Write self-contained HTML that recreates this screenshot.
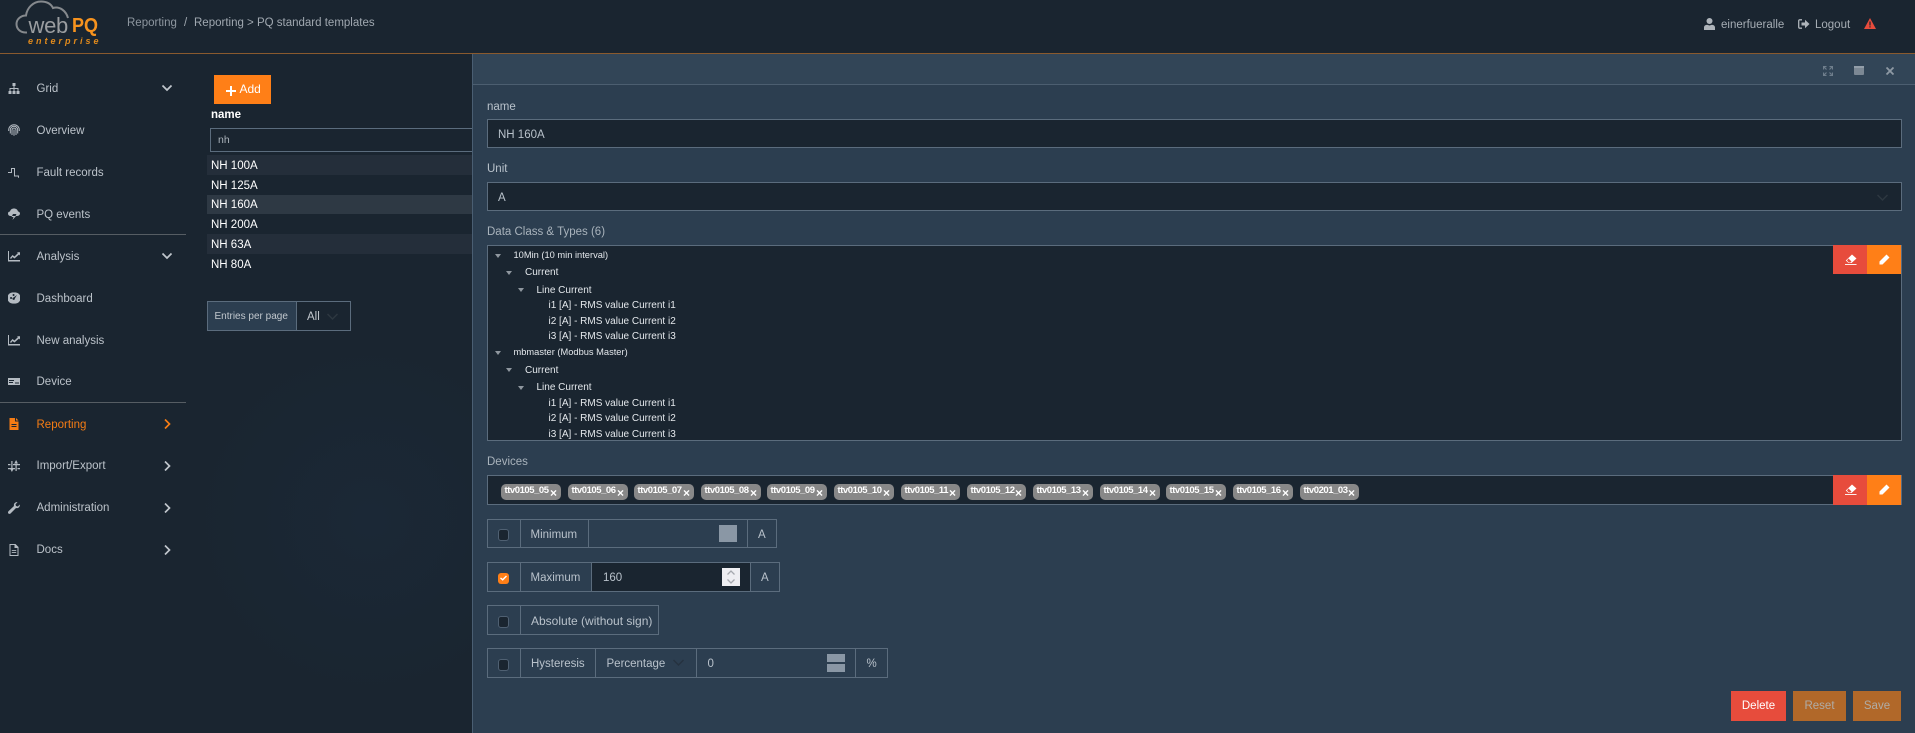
<!DOCTYPE html>
<html lang="en"><head><meta charset="utf-8"><title>webPQ</title>
<style>
*{box-sizing:border-box}
html,body{margin:0;padding:0;width:1915px;height:733px;overflow:hidden;background:#1a2530 radial-gradient(circle at 370px 520px,#1b2836 0,#1a2530 180px);font-family:"Liberation Sans",sans-serif;font-size:11.5px;color:#b9c0c7}
div,span.a,svg{position:absolute}
.t{white-space:nowrap;line-height:18px;height:16px}
.nav{left:36.5px;color:#bcc3ca}
.ic{left:8px;width:12px;height:12px;fill:#b4bbc2}
.ch{fill:none;stroke:#c0c6cc;stroke-width:1.7}
.row{left:207px;width:265px;height:20px}
.rt{left:211px;color:#fff}
.in{background:#1a2530;border:1px solid #5b6c7d}
.t.tr{font-size:10px;color:#e4e8ec;line-height:16px}
.t.tr.l{font-size:9.3px}
.tri{width:0;height:0;border-left:3.5px solid transparent;border-right:3.5px solid transparent;border-top:4px solid #8f979f}
.chip{top:484px;height:16px;background:#888;border-radius:5px;color:#fff;font-size:9.5px;letter-spacing:-.45px;font-weight:bold;line-height:14px;padding-left:3.5px;white-space:nowrap}
.chip b{position:absolute;right:4px;top:1.5px;font-size:12px;line-height:14px;letter-spacing:0}
.b{border:1px solid #5b6c7d}
.cb{width:11px;height:12px;border-radius:3px;background:#1a2530;border:1px solid #4f6072;left:498px}
.lb{color:#b9c2cb}
.btn{top:691px;height:30px;text-align:center;line-height:31px}
</style></head><body>
<!-- header -->
<div style="left:0;top:53px;width:1915px;height:1px;background:#8a5a2e"></div>
<svg style="left:0;top:0" width="130" height="53"><path d="M27 32.500C20 33 16.500 28.500 16.500 24C16.500 19 21 15.500 26 15.500C27 8 33 1.500 41 1.500C47 1.500 51 4 53 8C60 6 66 11 68 18" fill="none" stroke="#85898d" stroke-width="2"/></svg>
<div class="t" style="left:28.500px;top:13.500px;height:24px;line-height:24px;font-size:22px;color:#9a9da0;letter-spacing:-.3px">web</div>
<div class="t" style="left:72px;top:14px;height:24px;line-height:24px;font-size:20px;font-weight:bold;color:#f7931e;transform:scaleX(.9);transform-origin:left">PQ</div>
<div class="t" style="left:28px;top:34px;height:14px;line-height:14px;font-size:9px;font-style:italic;color:#e08a1c;letter-spacing:3px;font-weight:bold">enterprise</div>
<div class="t" style="left:127px;top:14px;color:#8d969f">Reporting</div>
<div class="t" style="left:184px;top:14px;color:#a0a8b0">/</div>
<div class="t" style="left:194px;top:14px;color:#a0a8b0">Reporting &gt; PQ standard templates</div>
<svg style="left:1704px;top:18px" width="11" height="12" viewBox="0 0 11 12"><circle cx="5.500" cy="3" r="3" fill="#aeb4ba"/><path d="M0 12V9.500C0 7.500 2 7 3 6.800L5.500 7.500 8 6.800C9 7 11 7.500 11 9.500V12Z" fill="#aeb4ba"/></svg>
<div class="t" style="left:1721px;top:16px;color:#a6adb4">einerfueralle</div>
<svg style="left:1798px;top:19px" width="12" height="10" viewBox="0 0 12 10"><path d="M4 .8H1.800C1 .8.700 1.300.700 2V8C.700 8.700 1 9.200 1.800 9.200H4" fill="none" stroke="#aeb4ba" stroke-width="1.300"/><path d="M3.500 3.500H7V.8L11.500 5 7 9.200V6.500H3.500Z" fill="#aeb4ba"/></svg>
<div class="t" style="left:1815px;top:16px;color:#a6adb4">Logout</div>
<svg style="left:1864px;top:18px" width="12" height="11" viewBox="0 0 12 11"><path d="M6 0L12 11H0Z" fill="#e74c3c"/><path d="M5.400 3.500H6.600V7.500H5.400ZM5.400 8.300H6.600V9.500H5.400Z" fill="#1a2530"/></svg>
<!-- sidebar -->
<svg class="ic" style="top:83px" viewBox="0 0 12 12"><path d="M4.500 0H7.500V3H6.500V5H10.500V8H11.500V11H8.500V8H9.500V6H6.500V8H7.500V11H4.500V8H5.500V6H2.500V8H3.500V11H.5V8H1.500V5H5.500V3H4.500Z"/></svg>
<div class="t nav" style="top:80px">Grid</div>
<svg class="ch" style="left:162px;top:84px" width="10" height="8"><path d="M.5 1.500L5 6 9.500 1.500"/></svg>
<svg class="ic" style="top:124px;fill:none;stroke:#b4bbc2;stroke-width:1" viewBox="0 0 12 12"><path d="M.7 7V6C.7 3 3 .7 6 .7S11.300 3 11.300 6V7M2.300 9.500V6C2.300 4 4 2.300 6 2.300S9.700 4 9.700 6V9.500M4 11V6C4 5 5 4 6 4S8 5 8 6V11M6 5.500V11.800"/></svg>
<div class="t nav" style="top:121.500px">Overview</div>
<svg class="ic" style="top:166px;fill:none;stroke:#b4bbc2;stroke-width:1" viewBox="0 0 12 12"><path d="M0 6.500H3.500V2.500H6.500V10H10.500V11.800"/></svg>
<div class="t nav" style="top:163.500px">Fault records</div>
<svg class="ic" style="top:208px" viewBox="0 0 12 12"><path d="M3 8C1 8 0 7 0 5.500S1 3.500 2 3.500C2.500 1.500 4 .5 6 .5S9.500 1.500 10 3.500C11 3.500 12 4.500 12 5.500S11 8 9 8H7.500L8.500 6H5L3.500 9H5.500L4.500 12 8 8Z"/></svg>
<div class="t nav" style="top:205.500px">PQ events</div>
<div style="left:0;top:234px;width:186px;height:1px;background:#565d63"></div>
<svg class="ic" style="top:250px" viewBox="0 0 12 12"><path d="M0 1H1V10H12V11.500H0Z"/><path d="M2 8L4.500 5 6.500 6.500 10 3 8.800 2.200H12V5.500L11 4.500 6.500 8.500 4.500 7 3 9Z"/></svg>
<div class="t nav" style="top:248px">Analysis</div>
<svg class="ch" style="left:162px;top:252px" width="10" height="8"><path d="M.5 1.500L5 6 9.500 1.500"/></svg>
<svg class="ic" style="top:292px" viewBox="0 0 12 12"><path fill-rule="evenodd" d="M6 .5A5.600 5.600 0 1 0 6 11.500A5.600 5.600 0 1 0 6 .5ZM9 3L6.800 6.500A1.200 1.200 0 1 1 5.500 5.500ZM3 5A1 1 0 1 0 3.100 5ZM5.500 2A1 1 0 1 0 5.600 2Z"/></svg>
<div class="t nav" style="top:290px">Dashboard</div>
<svg class="ic" style="top:334px" viewBox="0 0 12 12"><path d="M0 1H1V10H12V11.500H0Z"/><path d="M2 8L4.500 5 6.500 6.500 10 3 8.800 2.200H12V5.500L11 4.500 6.500 8.500 4.500 7 3 9Z"/></svg>
<div class="t nav" style="top:332px">New analysis</div>
<svg class="ic" style="top:375px" viewBox="0 0 12 12"><path fill-rule="evenodd" d="M0 3H12V10H0ZM1 5V6H6V5ZM1 7V8H5V7ZM7 7.500V8.500H11V7.500Z"/></svg>
<div class="t nav" style="top:372.500px">Device</div>
<div style="left:0;top:402px;width:186px;height:1px;background:#565d63"></div>
<svg class="ic" style="top:418px;fill:#f57c14" viewBox="0 0 12 12"><path fill-rule="evenodd" d="M1.500 0H7V3.500H10.500V12H1.500ZM8 0L10.500 2.500H8ZM3.500 6V7H8.500V6ZM3.500 8V9H8.500V8Z"/></svg>
<div class="t nav" style="top:415.500px;color:#f57c14">Reporting</div>
<svg class="ch" style="left:163.500px;top:419px;stroke:#f57c14" width="8" height="10"><path d="M1 .5L5.500 5 1 9.500"/></svg>
<svg class="ic" style="top:460px" viewBox="0 0 12 12"><path d="M0 4H2.500V5.200H0ZM5 4H12V5.200H5ZM0 8H7V9.200H0ZM9.500 8H12V9.200H9.500Z"/><path d="M3.300 1H4.500V9L6 8 3.900 12 1.800 8 3.300 9ZM7.500 11H8.700V3L10.200 4 8.100 0 6 4 7.500 3Z"/></svg>
<div class="t nav" style="top:457px">Import/Export</div>
<svg class="ch" style="left:163.500px;top:461px" width="8" height="10"><path d="M1 .5L5.500 5 1 9.500"/></svg>
<svg class="ic" style="top:502px" viewBox="0 0 12 12"><path d="M11.800 2.500C12.200 4.500 10.500 6.700 8 6L2.800 11.300C2 12.200.7 12 .2 11.200-.2 10.500 0 9.700.6 9.100L6 4C5.300 1.500 7.500-.3 9.500.2L7.500 2.200 8 4 9.800 4.500Z"/></svg>
<div class="t nav" style="top:499px">Administration</div>
<svg class="ch" style="left:163.500px;top:503px" width="8" height="10"><path d="M1 .5L5.500 5 1 9.500"/></svg>
<svg class="ic" style="top:544px" viewBox="0 0 12 12"><path fill-rule="evenodd" d="M1.500 0H7.500L10.500 3V12H1.500ZM2.500 1V11H9.500V4H6.500V1ZM3.800 6H8.200V6.900H3.800ZM3.800 8H8.200V8.900H3.800Z"/></svg>
<div class="t nav" style="top:541px">Docs</div>
<svg class="ch" style="left:163.500px;top:545px" width="8" height="10"><path d="M1 .5L5.500 5 1 9.500"/></svg>
<!-- list -->
<div style="left:214px;top:75px;width:57px;height:29px;background:#ff7f17"></div>
<div style="left:226px;top:90px;width:10px;height:2px;background:#fff"></div>
<div style="left:230px;top:86px;width:2px;height:10px;background:#fff"></div>
<div class="t" style="left:239.500px;top:80px;color:#fff;font-size:12px">Add</div>
<div class="t" style="left:211px;top:106px;color:#fff;font-weight:bold">name</div>
<div class="in" style="left:210px;top:128px;width:262px;height:24px;border-right:0"></div>
<div class="t" style="left:218px;top:131px;font-size:10.500px;color:#aab2ba">nh</div>
<div class="row" style="top:155px;background:#242e3a"></div>
<div class="row" style="top:195px;height:19px;background:#2e3944"></div>
<div class="row" style="top:234px;background:#242e3a"></div>
<div class="t rt" style="top:157px">NH 100A</div>
<div class="t rt" style="top:177px">NH 125A</div>
<div class="t rt" style="top:196px">NH 160A</div>
<div class="t rt" style="top:216px">NH 200A</div>
<div class="t rt" style="top:236px">NH 63A</div>
<div class="t rt" style="top:256px">NH 80A</div>
<div class="b" style="left:207px;top:301px;width:144px;height:30px"></div>
<div class="b" style="left:207px;top:301px;width:90px;height:30px;background:#2c3e50"></div>
<div class="t" style="left:214.500px;top:308px;font-size:10px;color:#c2c8ce">Entries per page</div>
<div class="t" style="left:307px;top:308px;color:#c2c8ce">All</div>
<svg style="left:327px;top:313px;fill:none;stroke:#2d3740;stroke-width:1.500" width="11" height="8"><path d="M.5 1L5.500 6 10.500 1"/></svg>
<!-- panel -->
<div style="left:472px;top:54px;width:1443px;height:679px;background:#2c3e50;border-left:1px solid #4a5e72"></div>
<div style="left:473px;top:54px;width:1442px;height:31px;background:#324557;border-bottom:1px solid #4c5e70"></div>
<svg style="left:1823px;top:66px;fill:none;stroke:#6f7e8c;stroke-width:1.200" width="10" height="10"><path d="M.5 3.500V.5H3.500M6.500.5H9.500V3.500M9.500 6.500V9.500H6.500M3.500 9.500H.5V6.500M.5.5L3.500 3.500M9.500.5L6.500 3.500M9.500 9.500L6.500 6.500M.5 9.500L3.500 6.500"/></svg>
<svg style="left:1854px;top:66px" width="10" height="9"><rect width="10" height="9" rx="1" fill="#7c8894"/><rect x="0" y="0" width="10" height="2" fill="#939ea9"/></svg>
<svg style="left:1885.500px;top:67px;fill:none;stroke:#8e99a4;stroke-width:1.800" width="8" height="8"><path d="M.5.5L7.500 7.500M7.500.5L.5 7.500"/></svg>
<div class="t lb" style="left:487px;top:98px">name</div>
<div class="in" style="left:487px;top:119px;width:1415px;height:29px"></div>
<div class="t lb" style="left:498px;top:126px">NH 160A</div>
<div class="t lb" style="left:487px;top:160px">Unit</div>
<div class="in" style="left:487px;top:182px;width:1415px;height:29px"></div>
<div class="t lb" style="left:498px;top:189px">A</div>
<svg style="left:1877px;top:194px;fill:none;stroke:#2d3740;stroke-width:1.500" width="11" height="8"><path d="M.5 1L5.500 6 10.500 1"/></svg>
<div class="t" style="left:487px;top:223px;color:#a9b3bc">Data Class &amp; Types (6)</div>
<div class="in" style="left:487px;top:245px;width:1415px;height:196px"></div>
<div class="tri" style="left:494.500px;top:254px"></div><div class="t tr l" style="left:513.500px;top:247px">10Min (10 min interval)</div>
<div class="tri" style="left:505.500px;top:271px"></div><div class="t tr" style="left:525px;top:265px">Current</div>
<div class="tri" style="left:517.500px;top:288px"></div><div class="t tr" style="left:536.500px;top:283px">Line Current</div>
<div class="t tr" style="left:548.500px;top:298px">i1 [A] - RMS value Current i1</div>
<div class="t tr" style="left:548.500px;top:314px">i2 [A] - RMS value Current i2</div>
<div class="t tr" style="left:548.500px;top:329px">i3 [A] - RMS value Current i3</div>
<div class="tri" style="left:494.500px;top:351px"></div><div class="t tr l" style="left:513.500px;top:344px">mbmaster (Modbus Master)</div>
<div class="tri" style="left:505.500px;top:368px"></div><div class="t tr" style="left:525px;top:363px">Current</div>
<div class="tri" style="left:517.500px;top:386px"></div><div class="t tr" style="left:536.500px;top:380px">Line Current</div>
<div class="t tr" style="left:548.500px;top:396px">i1 [A] - RMS value Current i1</div>
<div class="t tr" style="left:548.500px;top:411px">i2 [A] - RMS value Current i2</div>
<div class="t tr" style="left:548.500px;top:427px">i3 [A] - RMS value Current i3</div>
<div style="left:1833px;top:245px;width:34px;height:29px;background:#e74c3c"></div>
<div style="left:1867px;top:245px;width:34px;height:29px;background:#ff7f17"></div>
<svg style="left:1845px;top:254px" width="12" height="11" viewBox="0 0 12 11"><path d="M7 .5L11.500 4.500 6.500 9H3.500L.8 6.500Z" fill="#fff"/><path d="M0 10H11.500V10.900H0Z" fill="#fff"/><path d="M3.500 4.500L6.500 7.500 5.500 8.500H3.800L2 6.500Z" fill="#e74c3c"/></svg>
<svg style="left:1879px;top:254px" width="11" height="11" viewBox="0 0 11 11"><path d="M7.500.5L10.500 3.500 3.500 10.500H.5V7.500Z" fill="#fff"/></svg>
<div class="t" style="left:487px;top:453px;color:#a9b3bc">Devices</div>
<div class="in" style="left:487px;top:475px;width:1415px;height:30px"></div>
<div class="chip" style="left:501px;width:60px">ttv0105_05<b>×</b></div>
<div class="chip" style="left:568px;width:60px">ttv0105_06<b>×</b></div>
<div class="chip" style="left:634px;width:60px">ttv0105_07<b>×</b></div>
<div class="chip" style="left:701px;width:60px">ttv0105_08<b>×</b></div>
<div class="chip" style="left:767px;width:60px">ttv0105_09<b>×</b></div>
<div class="chip" style="left:834px;width:60px">ttv0105_10<b>×</b></div>
<div class="chip" style="left:901px;width:59px">ttv0105_11<b>×</b></div>
<div class="chip" style="left:967px;width:59px">ttv0105_12<b>×</b></div>
<div class="chip" style="left:1033px;width:60px">ttv0105_13<b>×</b></div>
<div class="chip" style="left:1100px;width:60px">ttv0105_14<b>×</b></div>
<div class="chip" style="left:1166px;width:60px">ttv0105_15<b>×</b></div>
<div class="chip" style="left:1233px;width:60px">ttv0105_16<b>×</b></div>
<div class="chip" style="left:1300px;width:59px">ttv0201_03<b>×</b></div>
<div style="left:1833px;top:475px;width:34px;height:30px;background:#e74c3c"></div>
<div style="left:1867px;top:475px;width:34px;height:30px;background:#ff7f17"></div>
<svg style="left:1845px;top:484px" width="12" height="11" viewBox="0 0 12 11"><path d="M7 .5L11.500 4.500 6.500 9H3.500L.8 6.500Z" fill="#fff"/><path d="M0 10H11.500V10.900H0Z" fill="#fff"/><path d="M3.500 4.500L6.500 7.500 5.500 8.500H3.800L2 6.500Z" fill="#e74c3c"/></svg>
<svg style="left:1879px;top:484px" width="11" height="11" viewBox="0 0 11 11"><path d="M7.500.5L10.500 3.500 3.500 10.500H.5V7.500Z" fill="#fff"/></svg>
<!-- Minimum -->
<div class="b" style="left:487px;top:519px;width:290px;height:29px"></div>
<div style="left:520px;top:519px;width:1px;height:29px;background:#5b6c7d"></div>
<div style="left:588px;top:519px;width:1px;height:29px;background:#5b6c7d"></div>
<div style="left:747px;top:519px;width:1px;height:29px;background:#5b6c7d"></div>
<div class="cb" style="top:529px"></div>
<div class="t lb" style="left:530.500px;top:526px">Minimum</div>
<div style="left:719px;top:525px;width:18px;height:17px;background:#8a97a5"></div>
<div class="t lb" style="left:758px;top:526px">A</div>
<!-- Maximum -->
<div class="b" style="left:487px;top:562px;width:293px;height:30px"></div>
<div style="left:520px;top:562px;width:1px;height:30px;background:#5b6c7d"></div>
<div style="left:591px;top:562px;width:160px;height:30px;background:#1a2530;border:1px solid #5b6c7d"></div>
<div style="left:498px;top:573px;width:11px;height:11px;border-radius:3px;background:#ff7f17"></div>
<svg style="left:500px;top:575px;fill:none;stroke:#fff;stroke-width:1.400" width="7" height="6"><path d="M.5 3L2.700 4.800 6.500 1"/></svg>
<div class="t lb" style="left:530.500px;top:569px">Maximum</div>
<div class="t lb" style="left:603px;top:569px">160</div>
<div style="left:722px;top:568px;width:18px;height:18px;background:#eeeef2"></div>
<svg style="left:727px;top:570px;fill:none;stroke:#a5a8ae;stroke-width:1.300" width="8" height="14"><path d="M.5 4.500L4 1 7.500 4.500M.5 9.500L4 13 7.500 9.500"/></svg>
<div class="t lb" style="left:761px;top:569px">A</div>
<!-- Absolute -->
<div class="b" style="left:487px;top:605px;width:172px;height:30px"></div>
<div style="left:520px;top:605px;width:1px;height:30px;background:#5b6c7d"></div>
<div class="cb" style="top:616px"></div>
<div class="t lb" style="left:531px;top:612px;font-size:12px">Absolute (without sign)</div>
<!-- Hysteresis -->
<div class="b" style="left:487px;top:648px;width:401px;height:30px"></div>
<div style="left:520px;top:648px;width:1px;height:30px;background:#5b6c7d"></div>
<div style="left:595px;top:648px;width:1px;height:30px;background:#5b6c7d"></div>
<div style="left:696px;top:648px;width:1px;height:30px;background:#5b6c7d"></div>
<div style="left:855px;top:648px;width:1px;height:30px;background:#5b6c7d"></div>
<div class="cb" style="top:659px"></div>
<div class="t lb" style="left:531px;top:655px">Hysteresis</div>
<div class="t lb" style="left:606.500px;top:655px">Percentage</div>
<svg style="left:673px;top:659px;fill:none;stroke:#25323f;stroke-width:1.500" width="11" height="8"><path d="M.5 1L5.500 6 10.500 1"/></svg>
<div class="t lb" style="left:707.500px;top:655px">0</div>
<div style="left:827px;top:654px;width:18px;height:8px;background:#8a97a5"></div>
<div style="left:827px;top:664px;width:18px;height:8px;background:#8a97a5"></div>
<div class="t lb" style="left:866.500px;top:655px">%</div>
<!-- footer -->
<div class="btn" style="left:1731px;width:55px;background:#e74c3c;color:#fff">Delete</div>
<div class="btn" style="left:1793px;width:53px;background:#b16829;color:#b0aca6">Reset</div>
<div class="btn" style="left:1853px;width:48px;background:#b16829;color:#b0aca6">Save</div>
</body></html>
